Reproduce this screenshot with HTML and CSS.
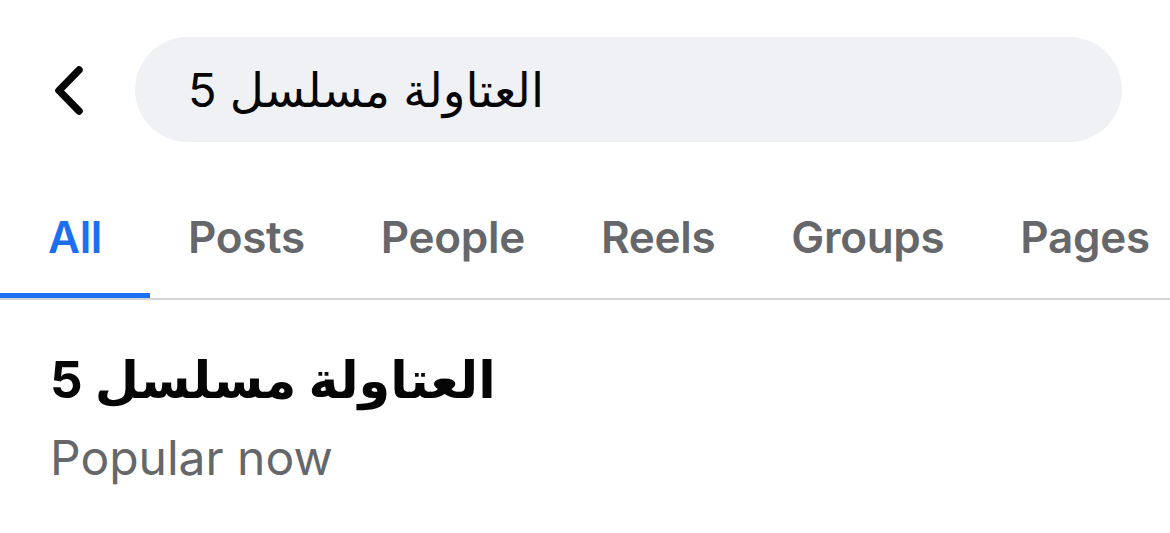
FILE: index.html
```html
<!DOCTYPE html>
<html lang="en">
<head>
<meta charset="utf-8">
<title>Search</title>
<link rel="stylesheet" href="styles.css">
</head>
<body>
<div class="screen">
  <header class="search-header">
    <button class="back" aria-label="Back">
      <svg width="40" height="56" viewBox="0 0 40 56"><path d="M30 8 L10 28.5 L30 49" fill="none" stroke="#050505" stroke-width="7.5" stroke-linecap="round" stroke-linejoin="round"/></svg>
    </button>
    <div class="search-bar">
      <span class="query">العتاولة مسلسل 5</span>
    </div>
  </header>
  <nav class="tabs">
    <div class="tab active">All</div>
    <div class="tab">Posts</div>
    <div class="tab">People</div>
    <div class="tab">Reels</div>
    <div class="tab">Groups</div>
    <div class="tab">Pages</div>
  </nav>
  <section class="result">
    <div class="result-title">العتاولة مسلسل 5</div>
    <div class="result-sub">Popular now</div>
  </section>
</div>
</body>
</html>
```

FILE: styles.css
```css
html, body {
  margin: 0;
  padding: 0;
  background: #ffffff;
}
body {
  font-family: Inter, "DejaVu Sans", sans-serif;
  color: #050505;
  overflow: hidden;
}
.screen {
  width: 1170px;
  height: 533px;
  overflow: hidden;
}
.search-header {
  display: flex;
  align-items: center;
  padding-top: 37px;
  height: 105px;
}
.back {
  width: 135px;
  height: 105px;
  padding: 0 0 0 49px;
  border: 0;
  background: none;
  display: flex;
  align-items: center;
  justify-content: flex-start;
}
.search-bar {
  width: 987px;
  height: 105px;
  border-radius: 53px;
  background: #f0f1f5;
  display: flex;
  align-items: center;
  padding-left: 53px;
  box-sizing: border-box;
}
.query {
  font-size: 47px;
  color: #050505;
  line-height: 1;
}
.tabs {
  display: flex;
  margin-top: 62px;
  border-bottom: 2px solid #d2d3d6;
}
.tab {
  flex-shrink: 0;
  padding: 0 38px;
  font-size: 44px;
  font-weight: 600;
  color: #65676b;
  line-height: 66px;
  height: 89px;
  border-bottom: 5px solid transparent;
  text-align: center;
  letter-spacing: -0.3px;
  white-space: nowrap;
}
.tab.active {
  min-width: 150px;
  padding: 0;
  color: #1b6ff0;
  border-bottom-color: #1b6ff0;
}
.result {
  padding: 44px 50px 0;
}
.result-title {
  font-size: 51px;
  font-weight: 700;
  line-height: 72px;
  color: #050505;
}
.result-sub {
  font-size: 48px;
  color: #65676b;
  line-height: 60px;
  margin-top: 12px;
}
```
